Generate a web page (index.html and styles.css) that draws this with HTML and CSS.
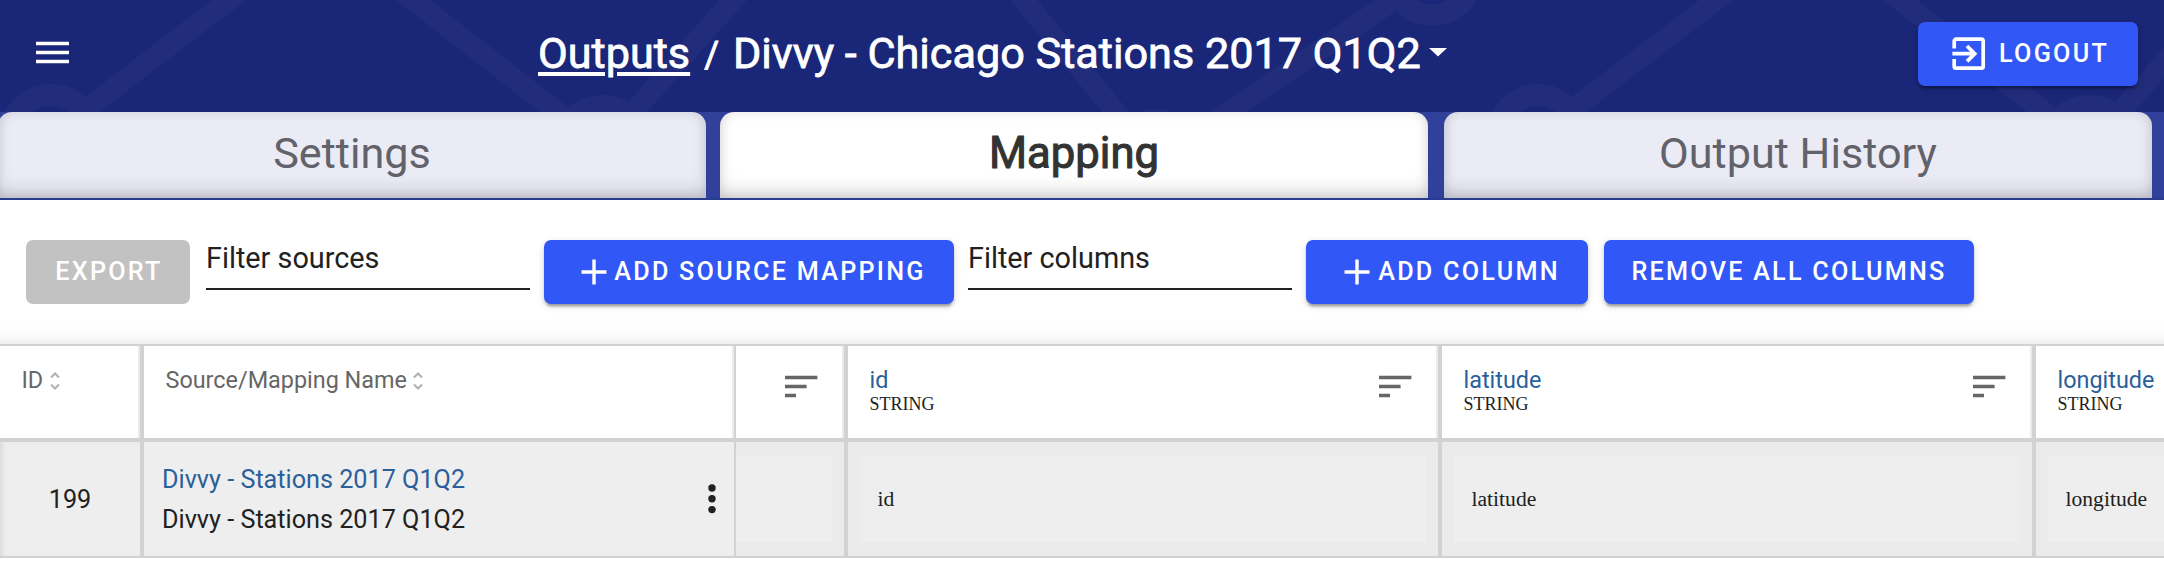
FILE: index.html
```html
<!DOCTYPE html>
<html lang="en">
<head>
<meta charset="utf-8">
<title>Divvy - Chicago Stations 2017 Q1Q2</title>
<link rel="stylesheet" href="styles.css">
</head>
<body>
<header class="header">
  <svg class="pattern" width="2164" height="112" viewBox="0 0 2164 112" aria-hidden="true">
    <defs>
      <g id="zigzag" stroke="#212d7b" stroke-width="21" fill="none">
        <path d="M254 -19L51 136M390 -18L602 147L749 -18M1009 -18L1156 161L1432 -26"/>
        <g fill="#1a2678" stroke-width="22">
          <circle cx="51" cy="136" r="41"/>
          <circle cx="602" cy="147" r="41"/>
          <circle cx="1156" cy="161" r="41"/>
          <circle cx="1432" cy="-26" r="41"/>
        </g>
      </g>
    </defs>
    <use href="#zigzag"/>
    <use href="#zigzag" x="1487"/>
  </svg>
  <svg class="menu-icon" width="33" height="23" viewBox="0 0 33 23" fill="#fff"><path d="M0 .7h33v3.6H0zM0 9.7h33v3.6H0zM0 18.7h33v3.6H0z"/></svg>
  <h1 class="title">
    <a class="crumb" href="#">Outputs</a><span class="slash">/</span><span>Divvy - Chicago Stations 2017 Q1Q2</span>
    <svg class="caret" width="18" height="9" viewBox="0 0 18 9"><path d="M0 0h18L9 8.5z" fill="#fff"/></svg>
  </h1>
  <button class="btn logout">
    <svg width="34" height="34" viewBox="0 0 34 34" fill="none" stroke="#fff" stroke-width="3.7"><path d="M2.2 11.5V4.2a2 2 0 0 1 2-2h25a2 2 0 0 1 2 2v25a2 2 0 0 1-2 2h-25a2 2 0 0 1-2-2v-7.3M.4 16.7H23M15 9l7.7 7.7L15 24.400"/></svg>
    <span>LOGOUT</span>
  </button>
</header>

<nav class="tabs">
  <a class="tab">Settings</a>
  <a class="tab active">Mapping</a>
  <a class="tab">Output History</a>
</nav>

<section class="toolbar">
  <button class="btn export">EXPORT</button>
  <div class="field">Filter sources</div>
  <button class="btn add-source"><svg width="26" height="26" viewBox="0 0 26 26"><path d="M13 .5v25M.5 13h25" stroke="#fff" stroke-width="3.4"/></svg>ADD SOURCE MAPPING</button>
  <div class="field">Filter columns</div>
  <button class="btn add-column"><svg width="26" height="26" viewBox="0 0 26 26"><path d="M13 .5v25M.5 13h25" stroke="#fff" stroke-width="3.4"/></svg>ADD COLUMN</button>
  <button class="btn remove">REMOVE ALL COLUMNS</button>
</section>

<main class="grid">
  <div class="row head">
    <div class="cell"><span class="label">ID</span><svg class="sort" width="10" height="18" viewBox="0 0 10 18"><path d="M1 5.500l4-4 4 4M1 12.500l4 4 4-4"/></svg></div>
    <div class="cell thin"><span class="label">Source/Mapping Name</span><svg class="sort" width="10" height="18" viewBox="0 0 10 18"><path d="M1 5.500l4-4 4 4M1 12.500l4 4 4-4"/></svg></div>
    <div class="cell"><svg class="lines" width="33" height="23" viewBox="0 0 33 23"><path d="M0 .7h32.400v3.600H0zM0 9.700h21.600v3.600H0zM0 18.700h11v3.600H0z"/></svg></div>
    <div class="cell"><div class="column"><a class="link">id</a><span class="type">STRING</span></div><svg class="lines" width="33" height="23" viewBox="0 0 33 23"><path d="M0 .7h32.400v3.600H0zM0 9.700h21.600v3.600H0zM0 18.700h11v3.600H0z"/></svg></div>
    <div class="cell"><div class="column"><a class="link">latitude</a><span class="type">STRING</span></div><svg class="lines" width="33" height="23" viewBox="0 0 33 23"><path d="M0 .7h32.400v3.600H0zM0 9.700h21.600v3.600H0zM0 18.700h11v3.600H0z"/></svg></div>
    <div class="cell last"><div class="column"><a class="link">longitude</a><span class="type">STRING</span></div></div>
  </div>
  <div class="row body">
    <div class="cell id">199</div>
    <div class="cell thin source">
      <div class="names"><a class="link">Divvy - Stations 2017 Q1Q2</a><span>Divvy - Stations 2017 Q1Q2</span></div>
      <svg class="more" width="8" height="30" viewBox="0 0 8 30" fill="#212121"><circle cx="4" cy="4" r="3.700"/><circle cx="4" cy="14.800" r="3.700"/><circle cx="4" cy="25.600" r="3.700"/></svg>
    </div>
    <div class="cell value blank"><div class="inner"></div></div>
    <div class="cell value"><div class="inner">id</div></div>
    <div class="cell value"><div class="inner">latitude</div></div>
    <div class="cell value last"><div class="inner">longitude</div></div>
  </div>
</main>
</body>
</html>
```
FILE: styles.css
```css
* { box-sizing: border-box; }
body {
  margin: 0;
  height: 566px;
  overflow: hidden;
  background: #fff;
  color: #212121;
  font-family: Roboto, sans-serif;
  white-space: nowrap;
}
svg { display: block; flex: none; }

.header {
  position: relative;
  display: flex;
  height: 112px;
  padding: 0 26px 0 36px;
  background: #1a2678;
  overflow: hidden;
}
.pattern { position: absolute; top: 0; left: 0; }
.menu-icon { position: relative; margin-top: 41px; }
.title {
  position: relative;
  display: flex;
  align-items: center;
  height: 106px;
  margin: 0 auto 0 469px;
  color: #fff;
  font-size: 43.2px;
  font-weight: 400;
  -webkit-text-stroke: .8px #fff;
}
.crumb {
  color: #fff;
  text-decoration: underline;
  text-decoration-thickness: 4px;
  text-underline-offset: 4px;
}
.slash { margin: 3px 14px 0 14px; font-size: 36px; }
.caret { margin: -2px 0 0 8px; }

.btn {
  display: flex;
  align-items: center;
  justify-content: center;
  flex: none;
  height: 64px;
  padding: 0 0 1px;
  border: 0;
  border-radius: 7px;
  background: #3157f6;
  color: #fff;
  font: 500 25.2px Roboto, sans-serif;
  letter-spacing: 2.25px;
  box-shadow: 0 5px 2px -3px rgba(0, 0, 0, .2), 0 3px 3px rgba(0, 0, 0, .16), 0 2px 9px rgba(0, 0, 0, .12);
}
.logout { position: relative; width: 220px; margin-top: 22px; justify-content: flex-start; padding-left: 34px; gap: 13px; }

.tabs {
  display: flex;
  gap: 14px;
  height: 88px;
  margin-left: -2px;
  background: #30409b;
  border-bottom: 2px solid #293c8f;
}
.tab {
  display: flex;
  flex: none;
  width: 708px;
  align-items: center;
  justify-content: center;
  padding-bottom: 4px;
  border-radius: 14px 14px 0 0;
  background: #ebebf6;
  color: #62626b;
  font-size: 43.2px;
  box-shadow: inset 0 -10px 20px -6px rgba(0, 0, 0, .2), inset 0 0 12px rgba(0, 0, 0, .1);
}
.tab:last-child { margin-left: 2px; }
.tab.active { background: #fff; color: #333; font-size: 43.6px; -webkit-text-stroke: 1.1px #333; }

.toolbar {
  display: flex;
  align-items: flex-start;
  height: 144px;
  padding: 40px 0 0 26px;
  background: linear-gradient(#fff 125px, #fbfbfb 136px, #f0f0f0);
}
.export { width: 164px; padding-left: 2px; background: #c2c2c2; box-shadow: none; }
.field {
  width: 324px;
  height: 50px;
  margin: 0 14px 0 16px;
  border-bottom: 2px solid #212121;
  font-size: 28.8px;
  line-height: 37px;
}
.add-source { width: 410px; gap: 7px; padding-left: 9px; }
.add-source + .field { margin-left: 14px; }
.add-column { width: 282px; gap: 8px; padding-left: 10px; }
.remove { width: 370px; margin-left: 16px; }

.row {
  display: grid;
  grid-template-columns: 144px 592px 112px 594px 594px 594px;
  width: 2164px;
  overflow: hidden;
}
.cell { display: flex; border-right: 4px solid #d2d2d2; }
.cell.thin { border-right-width: 2px; }
.head { height: 98px; border-top: 2px solid #d2d2d2; border-bottom: 4px solid #d2d2d2; }
.head .cell { padding: 20px 18px 0 21.5px; box-shadow: inset -2px 0 #ebebeb; color: #666; font-size: 23.4px; line-height: 28px; }
.head .last { overflow: visible; }
.sort { margin: 6px 0 0 6.5px; fill: none; stroke: #b0b0b0; stroke-width: 2; }
.lines { margin: 9px 8px 0 auto; fill: #666; }
.column { display: flex; flex-direction: column; }
.link { color: #2a6099; }
.type { color: #212121; font: 18px/20px "Liberation Serif", serif; }

.body { height: 116px; border-bottom: 2px solid #d2d2d2; background: #eee; font-size: 25.2px; }
.id { align-items: center; justify-content: center; box-shadow: inset 5px 0 5px -3px #d8d8d8; }
.source { align-items: center; padding: 1px 18px 0 18px; }
.names { display: flex; flex-direction: column; line-height: 40px; }
.more { margin: -1px 0 0 auto; }
.value { padding: 14px 12px; background: #ebebeb; font: 21.6px "Liberation Serif", serif; }
.blank { padding-left: 0; }
.inner { display: flex; flex: 1; align-items: center; padding: 0 0 0 17.5px; background: #eee; }
```
